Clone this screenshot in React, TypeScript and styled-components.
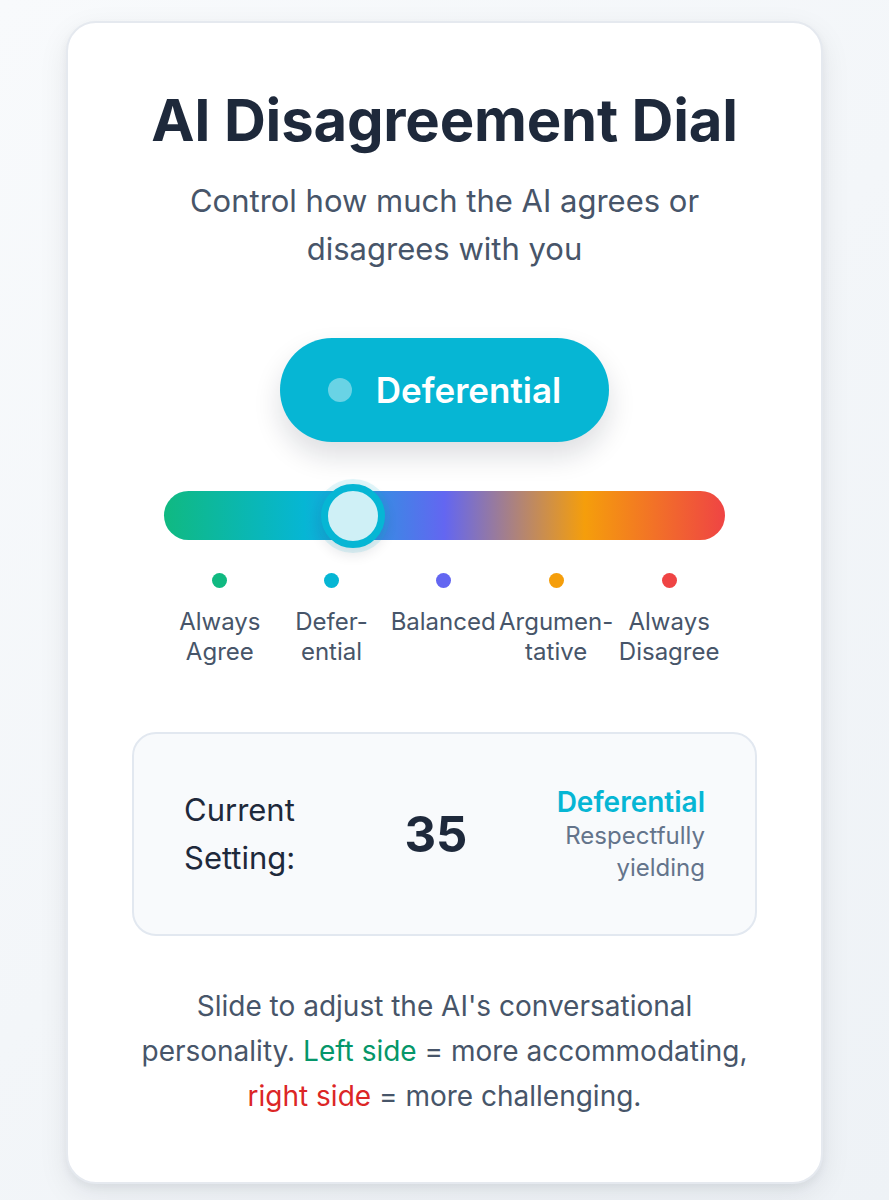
import React from "react";
import styled, { createGlobalStyle } from "styled-components";

const GlobalStyle = createGlobalStyle`
  body {
    margin: 0;
    font-family: Inter, "Noto Sans", "Liberation Sans", sans-serif;
    background: #f1f5f9;
  }
`;

const stops = [
  { label: ["Always", "Agree"], color: "#10b981" },
  { label: ["Defer-", "ential"], color: "#06b6d4" },
  { label: ["Balanced"], color: "#6366f1" },
  { label: ["Argumen-", "tative"], color: "#f59e0b" },
  { label: ["Always", "Disagree"], color: "#ef4444" },
];

function App() {
  const value = 35;
  return (
    <>
      <GlobalStyle />
      <Page>
        <Card>
          <Title>AI Disagreement Dial</Title>
          <Subtitle>
            Control how much the AI agrees or
            <br />
            disagrees with you
          </Subtitle>

          <BadgeRow>
            <Badge>
              <BadgeDot />
              Deferential
            </Badge>
          </BadgeRow>

          <SliderArea>
            <Track>
              <Thumb style={{ left: `${(value / 100) * 95 + 0.5}%` }} />
            </Track>
            <Stops>
              {stops.map((s) => (
                <Stop key={s.color}>
                  <StopDot $color={s.color} />
                  <StopLabel>
                    {s.label.map((l, i) => (
                      <span key={i}>{l}</span>
                    ))}
                  </StopLabel>
                </Stop>
              ))}
            </Stops>
          </SliderArea>

          <InfoBox>
            <InfoLabel>
              Current
              <br />
              Setting:
            </InfoLabel>
            <InfoValue>{value}</InfoValue>
            <InfoMode>
              <ModeName>Deferential</ModeName>
              <ModeDesc>
                Respectfully
                <br />
                yielding
              </ModeDesc>
            </InfoMode>
          </InfoBox>

          <Hint>
            Slide to adjust the AI's conversational
            <br />
            personality. <Green>Left side</Green> = more accommodating,
            <br />
            <Red>right side</Red> = more challenging.
          </Hint>
        </Card>
      </Page>
    </>
  );
}

const Page = styled.div`
  min-height: 1200px;
  box-sizing: border-box;
  padding: 21px 66px;
  background: linear-gradient(135deg, #f8fafc 0%, #eef2f6 100%);
`;

const Card = styled.div`
  box-sizing: border-box;
  width: 757px;
  background: #ffffff;
  border: 2px solid #e5e9ef;
  border-radius: 30px;
  padding: 64px 50px 63px;
  box-shadow: 0 10px 30px rgba(15, 23, 42, 0.08), 0 4px 8px rgba(15, 23, 42, 0.05);
  text-align: center;
`;

const Title = styled.h1`
  margin: 0;
  font-size: 58px;
  line-height: 67px;
  font-weight: 700;
  color: #1e293b;
  letter-spacing: -0.2px;
`;

const Subtitle = styled.p`
  margin: 23px 0 0;
  font-size: 31px;
  line-height: 48px;
  color: #475569;
`;

const BadgeRow = styled.div`
  display: flex;
  justify-content: center;
  margin-top: 65px;
`;

const Badge = styled.div`
  display: inline-flex;
  align-items: center;
  gap: 24px;
  height: 104px;
  box-sizing: border-box;
  padding: 0 48px;
  border-radius: 52px;
  background: #06b6d4;
  color: #ffffff;
  font-size: 35px;
  font-weight: 600;
  box-shadow: 0 14px 28px rgba(15, 23, 42, 0.14);
`;

const BadgeDot = styled.span`
  width: 24px;
  height: 24px;
  border-radius: 50%;
  background: rgba(255, 255, 255, 0.4);
`;

const SliderArea = styled.div`
  margin-top: 49px;
  padding: 0 46px;
`;

const Track = styled.div`
  position: relative;
  height: 49px;
  border-radius: 25px;
  background: linear-gradient(
    90deg,
    #10b981 0%,
    #06b6d4 25%,
    #6366f1 50%,
    #f59e0b 75%,
    #ef4444 100%
  );
`;

const Thumb = styled.div`
  position: absolute;
  top: 50%;
  width: 64px;
  height: 64px;
  box-sizing: border-box;
  margin-left: -32px;
  margin-top: -32px;
  border-radius: 50%;
  border: 7px solid #06b6d4;
  background: #cff0f6;
  box-shadow: 0 0 0 5px rgba(6, 182, 212, 0.12), 0 6px 14px rgba(15, 23, 42, 0.12);
`;

const Stops = styled.div`
  display: grid;
  grid-template-columns: repeat(5, 1fr);
  margin-top: 33px;
`;

const Stop = styled.div`
  display: flex;
  flex-direction: column;
  align-items: center;
`;

const StopDot = styled.span<{ $color: string }>`
  width: 15px;
  height: 15px;
  border-radius: 50%;
  background: ${(p) => p.$color};
`;

const StopLabel = styled.div`
  display: flex;
  flex-direction: column;
  margin-top: 19px;
  font-size: 24px;
  line-height: 30px;
  color: #475569;
  white-space: nowrap;
`;

const InfoBox = styled.div`
  display: flex;
  align-items: center;
  justify-content: space-between;
  margin: 65px 14px 0;
  height: 204px;
  box-sizing: border-box;
  padding: 0 50px;
  background: #f8fafc;
  border: 2px solid #e2e8f0;
  border-radius: 24px;
  text-align: left;
`;

const InfoLabel = styled.div`
  font-size: 31px;
  line-height: 48px;
  color: #1e293b;
`;

const InfoValue = styled.div`
  margin-left: 20px;
  font-size: 49px;
  font-weight: 700;
  color: #1e293b;
`;

const InfoMode = styled.div`
  text-align: right;
`;

const ModeName = styled.div`
  font-size: 28px;
  line-height: 36px;
  font-weight: 600;
  color: #06b6d4;
`;

const ModeDesc = styled.div`
  font-size: 24px;
  line-height: 32px;
  color: #64748b;
`;

const Hint = styled.p`
  margin: 48px 0 0;
  font-size: 28px;
  line-height: 45px;
  color: #475569;
  white-space: nowrap;
`;

const Green = styled.span`
  color: #059669;
`;

const Red = styled.span`
  color: #dc2626;
`;

export default App;
